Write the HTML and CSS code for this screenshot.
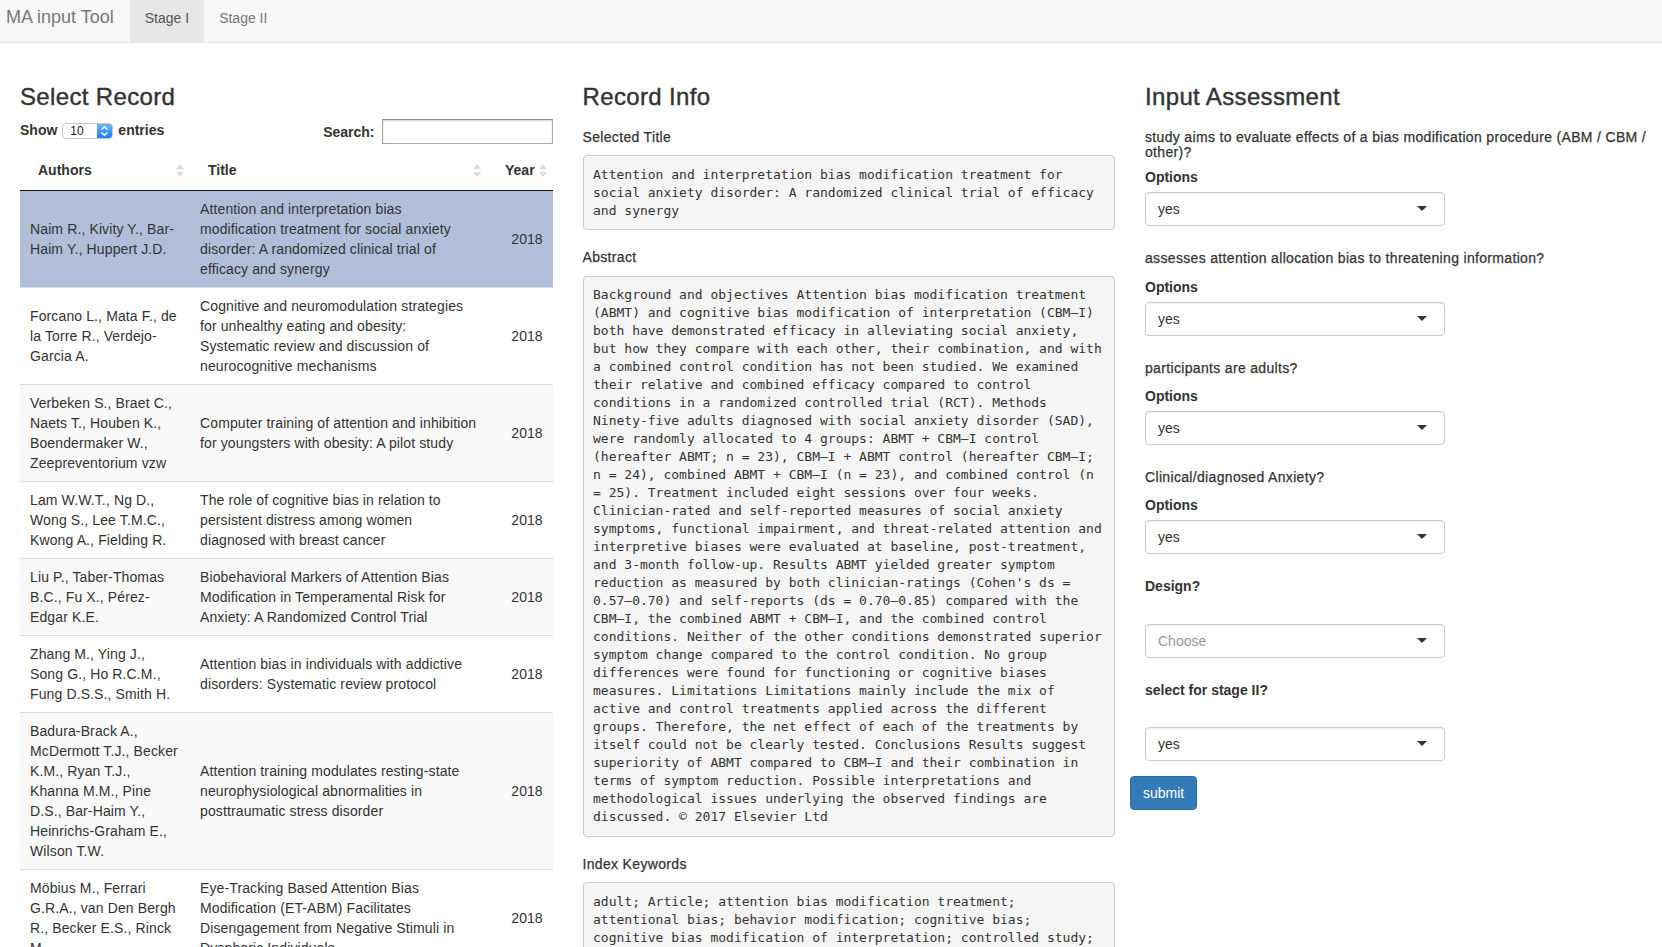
FILE: index.html
```html
<!DOCTYPE html>
<html lang="en">
<head>
<meta charset="utf-8">
<title>MA input Tool</title>
<link rel="stylesheet" href="styles.css">
</head>
<body>
<nav class="navbar">
  <span class="brand">MA input Tool</span>
  <ul class="nav-tabs">
    <li class="tab active">Stage I</li>
    <li class="tab">Stage II</li>
  </ul>
</nav>

<main class="layout">
  <section class="col">
    <h3>Select Record</h3>
    <div class="dt-controls">
      <label class="dt-length">Show
        <span class="mini-select"><span class="mini-value">10</span><span class="mini-stepper"><svg width="9" height="12" viewBox="0 0 9 12"><path d="M1.5 4.5 L4.5 1.8 L7.5 4.5" fill="none" stroke="#fff" stroke-width="1.4"/><path d="M1.5 7.5 L4.5 10.2 L7.5 7.5" fill="none" stroke="#fff" stroke-width="1.4"/></svg></span></span>
        entries</label>
      <label class="dt-filter">Search:<span class="search-input"></span></label>
    </div>
    <table class="records">
      <colgroup><col class="c-auth"><col class="c-title"><col class="c-year"></colgroup>
      <thead>
        <tr>
          <th>Authors<span class="sort"><svg width="8" height="14" viewBox="0 0 8 14"><path d="M4 0 L8 5 L0 5 Z" fill="#dcdcdc"/><path d="M0 8 L8 8 L4 13 Z" fill="#dcdcdc"/></svg></span></th>
          <th>Title<span class="sort"><svg width="8" height="14" viewBox="0 0 8 14"><path d="M4 0 L8 5 L0 5 Z" fill="#dcdcdc"/><path d="M0 8 L8 8 L4 13 Z" fill="#dcdcdc"/></svg></span></th>
          <th class="num">Year<span class="sort"><svg width="8" height="14" viewBox="0 0 8 14"><path d="M4 0 L8 5 L0 5 Z" fill="#dcdcdc"/><path d="M0 8 L8 8 L4 13 Z" fill="#dcdcdc"/></svg></span></th>
        </tr>
      </thead>
      <tbody>
        <tr class="odd selected"><td>Naim R., Kivity Y., Bar-Haim Y., Huppert J.D.</td><td>Attention and interpretation bias modification treatment for social anxiety disorder: A randomized clinical trial of efficacy and synergy</td><td class="num">2018</td></tr>
        <tr class="even"><td>Forcano L., Mata F., de la Torre R., Verdejo-Garcia A.</td><td>Cognitive and neuromodulation strategies for unhealthy eating and obesity: Systematic review and discussion of neurocognitive mechanisms</td><td class="num">2018</td></tr>
        <tr class="odd"><td>Verbeken S., Braet C., Naets T., Houben K., Boendermaker W., Zeepreventorium vzw</td><td>Computer training of attention and inhibition for youngsters with obesity: A pilot study</td><td class="num">2018</td></tr>
        <tr class="even"><td>Lam W.W.T., Ng D., Wong S., Lee T.M.C., Kwong A., Fielding R.</td><td>The role of cognitive bias in relation to persistent distress among women diagnosed with breast cancer</td><td class="num">2018</td></tr>
        <tr class="odd"><td>Liu P., Taber-Thomas B.C., Fu X., Pérez-Edgar K.E.</td><td>Biobehavioral Markers of Attention Bias Modification in Temperamental Risk for Anxiety: A Randomized Control Trial</td><td class="num">2018</td></tr>
        <tr class="even"><td>Zhang M., Ying J., Song G., Ho R.C.M., Fung D.S.S., Smith H.</td><td>Attention bias in individuals with addictive disorders: Systematic review protocol</td><td class="num">2018</td></tr>
        <tr class="odd"><td>Badura-Brack A., McDermott T.J., Becker K.M., Ryan T.J., Khanna M.M., Pine D.S., Bar-Haim Y., Heinrichs-Graham E., Wilson T.W.</td><td>Attention training modulates resting-state neurophysiological abnormalities in posttraumatic stress disorder</td><td class="num">2018</td></tr>
        <tr class="even"><td>Möbius M., Ferrari G.R.A., van Den Bergh R., Becker E.S., Rinck M.</td><td>Eye-Tracking Based Attention Bias Modification (ET-ABM) Facilitates Disengagement from Negative Stimuli in Dysphoric Individuals</td><td class="num">2018</td></tr>
      </tbody>
    </table>
  </section>

  <section class="col">
    <h3>Record Info</h3>
    <h5>Selected Title</h5>
    <pre>Attention and interpretation bias modification treatment for social anxiety disorder: A randomized clinical trial of efficacy and synergy</pre>
    <h5>Abstract</h5>
    <pre>Background and objectives Attention bias modification treatment (ABMT) and cognitive bias modification of interpretation (CBM–I) both have demonstrated efficacy in alleviating social anxiety, but how they compare with each other, their combination, and with a combined control condition has not been studied. We examined their relative and combined efficacy compared to control conditions in a randomized controlled trial (RCT). Methods Ninety-five adults diagnosed with social anxiety disorder (SAD), were randomly allocated to 4 groups: ABMT + CBM–I control (hereafter ABMT; n = 23), CBM–I + ABMT control (hereafter CBM–I; n = 24), combined ABMT + CBM–I (n = 23), and combined control (n = 25). Treatment included eight sessions over four weeks. Clinician-rated and self-reported measures of social anxiety symptoms, functional impairment, and threat-related attention and interpretive biases were evaluated at baseline, post-treatment, and 3-month follow-up. Results ABMT yielded greater symptom reduction as measured by both clinician-ratings (Cohen's ds = 0.57–0.70) and self-reports (ds = 0.70–0.85) compared with the CBM–I, the combined ABMT + CBM–I, and the combined control conditions. Neither of the other conditions demonstrated superior symptom change compared to the control condition. No group differences were found for functioning or cognitive biases measures. Limitations Limitations mainly include the mix of active and control treatments applied across the different groups. Therefore, the net effect of each of the treatments by itself could not be clearly tested. Conclusions Results suggest superiority of ABMT compared to CBM–I and their combination in terms of symptom reduction. Possible interpretations and methodological issues underlying the observed findings are discussed. © 2017 Elsevier Ltd</pre>
    <h5>Index Keywords</h5>
    <pre>adult; Article; attention bias modification treatment; attentional bias; behavior modification; cognitive bias; cognitive bias modification of interpretation; controlled study; female; human; major clinical study; male; priority journal; randomized controlled trial; social phobia</pre>
  </section>

  <section class="col">
    <h3>Input Assessment</h3>
    <h5 class="lead-q">study aims to evaluate effects of a bias modification procedure (ABM / CBM / other)?</h5>
    <div class="form-group">
      <label class="control-label">Options</label>
      <div class="selectize"><span class="sel-value">yes</span><span class="caret"></span></div>
    </div>
    <h5>assesses attention allocation bias to threatening information?</h5>
    <div class="form-group">
      <label class="control-label">Options</label>
      <div class="selectize"><span class="sel-value">yes</span><span class="caret"></span></div>
    </div>
    <h5>participants are adults?</h5>
    <div class="form-group">
      <label class="control-label">Options</label>
      <div class="selectize"><span class="sel-value">yes</span><span class="caret"></span></div>
    </div>
    <h5>Clinical/diagnosed Anxiety?</h5>
    <div class="form-group">
      <label class="control-label">Options</label>
      <div class="selectize"><span class="sel-value">yes</span><span class="caret"></span></div>
    </div>
    <h5 class="strong">Design?</h5>
    <div class="form-group">
      <label class="control-label empty"></label>
      <div class="selectize"><span class="sel-value placeholder">Choose</span><span class="caret"></span></div>
    </div>
    <h5 class="strong">select for stage II?</h5>
    <div class="form-group">
      <label class="control-label empty"></label>
      <div class="selectize"><span class="sel-value">yes</span><span class="caret"></span></div>
    </div>
    <button class="btn-submit" type="button">submit</button>
  </section>
</main>
</body>
</html>
```

FILE: styles.css
```css
html, body {
  overflow: hidden;
}
body {
  margin: 0;
  font-family: "Liberation Sans", Arial, sans-serif;
  font-size: 14px;
  line-height: 20px;
  color: #333;
  background: #fff;
}

/* navbar */
.navbar {
  display: flex;
  height: 42px;
  background: #f8f8f8;
  border-bottom: 1px solid #e7e7e7;
}
.brand {
  font-size: 18px;
  line-height: 20px;
  color: #777;
  padding: 7px 16px 0 6px;
}
.nav-tabs {
  display: flex;
  list-style: none;
  margin: 0;
  padding: 0;
}
.tab {
  padding: 8px 15px 0 15px;
  color: #777;
  line-height: 20px;
}
.tab.active {
  background: #e7e7e7;
  color: #555;
}

/* layout */
.layout {
  display: grid;
  grid-template-columns: 532.5px 532.5px 532.5px;
  column-gap: 30px;
  padding-left: 20px;
  align-items: start;
}
.col {
  display: flex;
  flex-direction: column;
  align-items: stretch;
  min-width: 0;
}
h3 {
  font-size: 24px;
  font-weight: 500;
  line-height: 1.1;
  margin: 40.5px 0 10px 0;
  color: #333;
  letter-spacing: 0.35px;
  -webkit-text-stroke: 0.4px #333;
}
h5 {
  font-size: 14px;
  font-weight: 500;
  line-height: 1.1;
  margin: 10px 0 10px 0;
  color: #333;
  letter-spacing: 0.33px;
  -webkit-text-stroke: 0.25px #333;
}
h5.lead-q {
  line-height: 1.05;
  margin-bottom: 8px;
}
h5.strong {
  font-weight: 700;
  letter-spacing: 0;
  -webkit-text-stroke: 0;
}

/* datatable controls */
.dt-controls {
  display: flex;
  justify-content: space-between;
  align-items: center;
  height: 26px;
  margin-top: -1px;
}
.dt-length {
  display: flex;
  align-items: center;
  font-weight: 700;
  margin-top: -4px;
}
.mini-select {
  display: inline-flex;
  width: 51px;
  height: 16px;
  margin: 2px 5px 0 5px;
  border: 1px solid #c9c9c9;
  border-radius: 4px;
  background: #fff;
  box-sizing: border-box;
  overflow: hidden;
}
.mini-value {
  flex: 1;
  font-weight: 400;
  font-size: 12px;
  line-height: 14px;
  padding-left: 7px;
  color: #222;
}
.mini-stepper {
  width: 15px;
  display: flex;
  align-items: center;
  justify-content: center;
  background: linear-gradient(#6db3fb, #1b7ef6);
}
.dt-filter {
  display: flex;
  align-items: center;
  font-weight: 700;
}
.search-input {
  display: inline-block;
  width: 171px;
  height: 25px;
  margin-left: 7px;
  box-sizing: border-box;
  border: 1px solid #a9a9a9;
  border-top-color: #8f8f8f;
  box-shadow: inset 0 1px 2px rgba(0,0,0,0.18);
  background: #fff;
}

/* table */
.records {
  width: 532.5px;
  margin-top: 5px;
  border-collapse: collapse;
  table-layout: fixed;
}
.c-auth { width: 170px; }
.c-title { width: 297px; }
.c-year { width: 65.5px; }
.records th {
  position: relative;
  text-align: left;
  font-weight: 700;
  padding: 10px 18px;
  border-bottom: 1px solid #111;
}
.records th.num { text-align: right; padding-right: 19px; }
.sort {
  position: absolute;
  right: 6px;
  top: 14px;
  line-height: 0;
}
.records td {
  padding: 8px 10px;
  vertical-align: middle;
  border-top: 1px solid #ddd;
  letter-spacing: 0.12px;
}
.records tbody tr:first-child td { border-top: 0; }
.records td.num { text-align: right; letter-spacing: 0; }
.records tr.odd { background: #f9f9f9; }
.records tr.even { background: #fff; }
.records tr.selected { background: #b0bed9; }

/* pre */
pre {
  margin: 0 0 10px 0;
  padding: 9.5px;
  font-family: "DejaVu Sans Mono", "Liberation Mono", monospace;
  font-size: 13px;
  line-height: 18px;
  color: #333;
  background: #f5f5f5;
  border: 1px solid #ccc;
  border-radius: 4px;
  white-space: pre-wrap;
  word-break: normal;
  overflow-wrap: break-word;
}

/* forms */
.form-group {
  width: 300px;
  margin-bottom: 15px;
}
.control-label {
  display: block;
  font-weight: 700;
  height: 20px;
  margin-bottom: 5px;
}
.control-label.empty { height: 14px; }
.selectize {
  position: relative;
  height: 34px;
  box-sizing: border-box;
  border: 1px solid #ccc;
  border-radius: 4px;
  background: #fff;
  box-shadow: inset 0 1px 1px rgba(0,0,0,0.075);
  padding: 6px 12px;
}
.sel-value { color: #333; }
.sel-value.placeholder { color: #999; }
.caret {
  position: absolute;
  right: 17px;
  top: 50%;
  margin-top: -3px;
  width: 0;
  height: 0;
  border-style: solid;
  border-width: 5px 5px 0 5px;
  border-color: #333 transparent transparent transparent;
}
.btn-submit {
  align-self: flex-start;
  margin-left: -15px;
  height: 34px;
  padding: 6px 12px;
  font-family: "Liberation Sans", Arial, sans-serif;
  font-size: 14px;
  line-height: 20px;
  color: #fff;
  background: #337ab7;
  border: 1px solid #2e6da4;
  border-radius: 4px;
}
```
